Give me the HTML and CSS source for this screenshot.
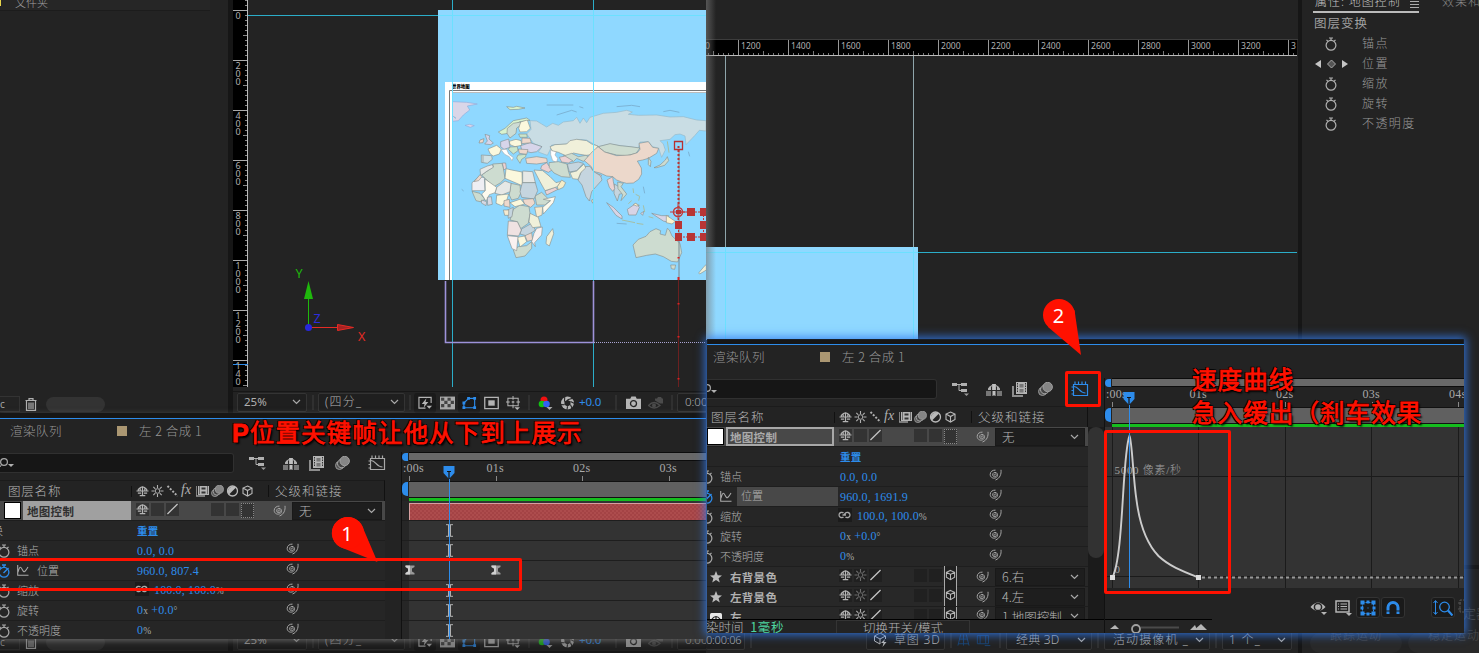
FILE: index.html
```html
<!DOCTYPE html>
<html lang="zh-CN">
<head>
<meta charset="utf-8">
<title>地图控制</title>
<link rel="stylesheet" href="styles.css">
</head>
<body>
<svg class="defs" width="0" height="0">
  <symbol id="spiral" viewBox="0 0 13 12"><path d="M5.200 6.600C4.600 4.600 7.500 4.300 7.300 6.400 7.100 8.200 3.900 8.200 3.700 6 3.500 3.800 5.500 3 7 3.600 9.200 4.600 8.900 7.300 7.200 8.500 4.800 10.100 1.300 8.700 1.200 5.600 1.100 2.700 3.500 1 6.500 1.100M12 .8c.5 4.200-1 8.500-5.500 10.200" fill="none" stroke="#a6a6a6" stroke-width="1"/></symbol>
  <symbol id="shy" viewBox="0 0 14 12"><path d="M2.500 5.500V4.200Q7-1 11.500 4.200V5.500M.5 6h13M7 1v10M4.500 3v3M9.500 3v3M2 8.300h3.500M8.500 8.300H12M4 11h6" fill="none" stroke="#b4b4b4" stroke-width="1.300"/></symbol>
  <symbol id="sun" viewBox="0 0 12 12"><path d="M6 0v3M6 9v3M0 6h3M9 6h3M1.800 1.800l2 2M8.200 8.200l2 2M10.200 1.800l-2 2M3.800 8.200l-2 2" stroke="currentColor" stroke-width="1.100"/><circle cx="6" cy="6" r="2.300" fill="none" stroke="currentColor"/></symbol>
  <symbol id="slash" viewBox="0 0 13 13"><path d="M1 12L12 1" stroke="#c4c4c4" stroke-width="1.400"/></symbol>
  <symbol id="dots" viewBox="0 0 12 12"><path d="M1 1l10 10" stroke="#b0b0b0" stroke-width="2" stroke-dasharray="2 1.500"/></symbol>
  <symbol id="film" viewBox="0 0 16 15"><path d="M0 4h2v9h9v2H0z" fill="#8d8d8d"/><path d="M4 0h11v12H4z" fill="#b4b4b4"/><path d="M5.500 1v10M13.500 1v10" stroke="#333" stroke-dasharray="1.500 1"/><path d="M7.500 2h4v3.500h-4zM7.500 7h4v3.500h-4z" fill="#777"/></symbol>
  <symbol id="filmrow" viewBox="0 0 13 12"><path d="M0 1v10h9" fill="none" stroke="#999" stroke-width="1.600"/><path d="M2 1h11v9H2z" fill="#b4b4b4"/><path d="M3.500 1.500v8M11.500 1.500v8" stroke="#222" stroke-dasharray="1 1"/><path d="M5.500 2.500h4v2h-4zM5.500 6.500h4v2h-4z" fill="#333"/></symbol>
  <symbol id="blur" viewBox="0 0 15 14"><circle cx="4.500" cy="9.500" r="4" fill="#555" stroke="#999"/><circle cx="6.800" cy="7.500" r="4.300" fill="#444" stroke="#aaa"/><circle cx="9.700" cy="5" r="4.700" fill="#858585" stroke="#a0a0a0"/></symbol>
  <symbol id="half" viewBox="0 0 12 12"><circle cx="6" cy="6" r="5" fill="none" stroke="#bbb" stroke-width="1.300"/><path d="M2.500 9.500A5 5 0 0 1 9.500 2.500z" fill="#bbb"/></symbol>
  <symbol id="cube" viewBox="0 0 12 12"><path d="M6 1l4.500 2v5.500L6 11 1.500 8.500V3zM1.500 3L6 5.500 10.500 3M6 5.500V11" fill="none" stroke="#b8b8b8" stroke-width="1.100"/></symbol>
  <symbol id="watch" viewBox="0 0 12 14"><circle cx="6" cy="8.300" r="4.900" fill="none" stroke="currentColor" stroke-width="1.200"/><path d="M4 1h4M6 1v2.500M1.500 2.800l1.500 1.500M10.500 2.800L9 4.300" stroke="currentColor" stroke-width="1.200"/></symbol>
  <symbol id="watchon" viewBox="0 0 12 14"><circle cx="6" cy="8.300" r="4.900" fill="none" stroke="#2d8ceb" stroke-width="1.300"/><path d="M4 1h4M6 1v2.500M1.500 2.800l1.500 1.500M5.500 9L10.500 4" stroke="#2d8ceb" stroke-width="1.400"/></symbol>
  <symbol id="graph" viewBox="0 0 12 12"><path d="M.7 1v10.300H11.500M1 8C3 1 4 3 5.500 6S8 8 11 3" fill="none" stroke="#aaa" stroke-width="1.100"/></symbol>
  <symbol id="chain" viewBox="0 0 13 8"><path d="M8 4H4.500M5.500 2C4.500 1 1 1 1 4s3.500 3 4.500 2M7.500 6C8.500 7 12 7 12 4S8.500 1 7.500 2L6 4" fill="none" stroke="#a8a8a8" stroke-width="1.300"/></symbol>
  <symbol id="chev" viewBox="0 0 9 6"><path d="M1 1l3.500 3.500L8 1" fill="none" stroke="#a8a8a8" stroke-width="1.200"/></symbol>
  <symbol id="tree" viewBox="0 0 17 14"><path d="M0 1h5v3H0zM9 1h6v3H9zM9 7h6v3H9z" fill="#b0b0b0"/><path d="M5 2.500h4M7 2.500v6h2" stroke="#b0b0b0" fill="none"/><path d="M12 11.500h5L14.500 14z" fill="#999"/></symbol>
  <symbol id="hide" viewBox="0 0 16 13"><path d="M0 8h16v5H0z" fill="#777"/><path d="M2 7V5.500Q3 3 6 2V1h4v1q3 1 4 3.500V7z" fill="#b0b0b0"/><path d="M5.500 3.500V13M10.500 3.500V13" stroke="#2a2a2a"/><path d="M8 1v11" stroke="#c0c0c0" stroke-width="2"/><path d="M0 7.500h16" stroke="#2a2a2a"/></symbol>
  <symbol id="editor" viewBox="0 0 18 16"><path d="M2.500 3.500h14v11h-14zM4 3V.5M7.500 3V.5M11 3V.5M14.500 3V.5M2 6H.5M2 9.500H.5M2 13H.5" fill="none" stroke="currentColor" stroke-width="1.200"/><path d="M3 5.500c5 0 5 6.500 11.500 6.500" fill="none" stroke="currentColor" stroke-width="1.200"/></symbol>
  <symbol id="lens" viewBox="0 0 14 11"><circle cx="4" cy="4" r="3.400" fill="none" stroke="#a8a8a8" stroke-width="1.200"/><path d="M1.500 6.500L0 9" stroke="#a8a8a8"/><path d="M8 6h6l-3 3z" fill="#b0b0b0"/></symbol>
  <symbol id="star" viewBox="0 0 12 12"><path d="M6 0l1.700 4.200L12 4.400 8.600 7.200 9.800 11.600 6 9.100 2.200 11.600 3.400 7.200 0 4.400 4.300 4.200z" fill="#bcbcbc"/></symbol>
  <symbol id="trash" viewBox="0 0 12 13"><path d="M.5 2.500h11M4 2V.7h4V2M1.500 3v9.400h9V3M4 4.500v6.500M6 4.500v6.500M8 4.500v6.500" fill="none" stroke="#b0b0b0" stroke-width="1.200"/></symbol>
  <symbol id="ibeam" viewBox="0 0 8 13"><path d="M.5.700h7M.5 12.300h7M3 1v11M5 1v11" stroke="#b0b0b0" stroke-width="1"/></symbol>
  <symbol id="hour" viewBox="0 0 10 10"><path d="M.5.500h9v1.500L7 3.500v3L9.500 8v1.500h-9V8L3 6.500v-3L.5 2z" fill="#999"/><path d="M5 .5H.5v1.500L3 3.500v3L.5 8v1.500H5z" fill="#d0d0d0"/></symbol>
  <symbol id="marker" viewBox="0 0 12 14"><path d="M.5 1h11v7L6 14 .5 8z" fill="#2d8ceb"/><path d="M4 6.500h4M6 6.500V14" stroke="#141414" stroke-width="1.200"/></symbol>
  <!-- viewer footer tools -->
  <symbol id="v-fast" viewBox="0 0 16 14"><path d="M8 12.500H1V1h13v6" fill="none" stroke="#b5b5b5" stroke-width="1.200"/><path d="M9 2L4 8h3l-1 4 5-6H8z" fill="#b5b5b5"/><path d="M9 10h6l-3 3z" fill="#b5b5b5"/></symbol>
  <symbol id="v-check" viewBox="0 0 14 12"><path d="M0 0h14v12H0z" fill="#aaa"/><path d="M1 1h3v3H1zM7 1h3v3H7zM4 4h3v3H4zM10 4h3v3h-3zM1 7h3v3H1zM7 7h3v3H7z" fill="#444"/></symbol>
  <symbol id="v-mask" viewBox="0 0 16 14"><path d="M2 12V7l5-5h6.500v10z" fill="none" stroke="#2d8ceb" stroke-width="1.200"/><path d="M.5 10.500h3v3h-3zM.5 5.500h3v3h-3zM5.500.5h3v3h-3zM12 .5h3v3h-3zM12 10.500h3v3h-3z" fill="#2d8ceb"/></symbol>
  <symbol id="v-roi" viewBox="0 0 14 12"><path d="M.7.700h12.600v10.600H.7z" fill="none" stroke="#b5b5b5" stroke-width="1.200"/><path d="M4 3.500h6v5H4z" fill="#b5b5b5"/></symbol>
  <symbol id="v-grid" viewBox="0 0 16 15"><path d="M2 2.500h11v8H2zM7.500 0v4M7.500 9v4M0 6.500h4M11 6.500h4M6 6.500h3M7.500 5v3" fill="none" stroke="#b5b5b5" stroke-width="1.100"/><path d="M9 12h6l-3 3z" fill="#b5b5b5"/></symbol>
  <symbol id="v-rgb" viewBox="0 0 14 14"><circle cx="5.500" cy="4" r="3.500" fill="#f01010"/><circle cx="3.500" cy="8" r="3.300" fill="#12c112"/><circle cx="8" cy="8" r="3.300" fill="#3161f5"/><path d="M8 11h6l-3 3z" fill="#aaa"/></symbol>
  <symbol id="v-iris" viewBox="0 0 13 13"><circle cx="6.500" cy="6.500" r="6" fill="#b5b5b5"/><path d="M6.500 3.500l2.800 1.700v3L6.500 9.700 3.700 8.200V5.200z" fill="#242424"/><path d="M6.500 3.500L11.500 2M9.300 8.200L11 12M3.700 8.200L0 8M6.500 9.700L6 13M3.700 5.200L4 0M9.300 5.200L13 7" stroke="#242424"/></symbol>
  <symbol id="v-cam" viewBox="0 0 14 12"><path d="M0 2h4l1-2h4l1 2h4v9.500H0z" fill="#b5b5b5"/><circle cx="7" cy="6.500" r="2.800" fill="#b5b5b5" stroke="#242424" stroke-width="1.200"/></symbol>
  <symbol id="v-eye" viewBox="0 0 15 13"><path d="M.5 9Q6 3 12 9 6 14 .5 9z" fill="none" stroke="#4b4b4b" stroke-width="1.300"/><circle cx="6" cy="9" r="2" fill="#4b4b4b"/><path d="M7 2h2l1-1.500h3l1 1.500h1v5h-3L7 4z" fill="#4b4b4b"/></symbol>
</svg>

<main class="stage">

<!-- ============ left application ============ -->
<section class="app app-left">
  <div class="work">
    <div class="project"><div class="folder"><i class="yellow"></i>文件夹</div></div>
    <svg class="vruler" width="15" height="387" viewBox="0 0 15 387">
      <defs>
        <pattern id="vt" width="15" height="50" y="10" patternUnits="userSpaceOnUse"><path d="M0 .5h15" stroke="#aaa"/><path d="M12 5.500h3M12 10.500h3M12 15.500h3M12 20.500h3M10 25.500h5M12 30.500h3M12 35.500h3M12 40.500h3M12 45.500h3" stroke="#888"/></pattern>
      </defs>
      <rect width="15" height="387" fill="#000"/><rect width="15" height="387" fill="url(#vt)"/><path d="M14.500 0v387" stroke="#bbb"/>
      <path d="M0 364.500h15" stroke="#2d8ceb"/>
      <g class="vlab">
        <text x="2.500" y="19">0</text>
        <text><tspan x="2.500" y="69">2</tspan><tspan x="2.500" y="77">0</tspan><tspan x="2.500" y="85">0</tspan></text>
        <text><tspan x="2.500" y="119">4</tspan><tspan x="2.500" y="127">0</tspan><tspan x="2.500" y="135">0</tspan></text>
        <text><tspan x="2.500" y="169">6</tspan><tspan x="2.500" y="177">0</tspan><tspan x="2.500" y="185">0</tspan></text>
        <text><tspan x="2.500" y="219">8</tspan><tspan x="2.500" y="227">0</tspan><tspan x="2.500" y="235">0</tspan></text>
        <text><tspan x="2.500" y="269">1</tspan><tspan x="2.500" y="277">0</tspan><tspan x="2.500" y="285">0</tspan><tspan x="2.500" y="293">0</tspan></text>
        <text><tspan x="2.500" y="319">1</tspan><tspan x="2.500" y="327">2</tspan><tspan x="2.500" y="335">0</tspan><tspan x="2.500" y="343">0</tspan></text>
        <text><tspan x="2.500" y="369">1</tspan><tspan x="2.500" y="377">4</tspan><tspan x="2.500" y="385">0</tspan></text>
      </g>
    </svg>
    <svg class="canvas" width="458" height="387" viewBox="248 0 458 387">
      <rect x="438" y="10" width="268" height="270" fill="#8fd8ff"/>
      <rect x="445" y="82" width="261" height="198" fill="#fff"/>
      <path d="M706 90.500H449.500V280" fill="none" stroke="#777"/>
      <rect x="452" y="93" width="254" height="187" fill="#8fd8ff"/><path d="M452 92.500h254" stroke="#bbb"/>
      <text x="452" y="88" class="maptitle">世界地图</text>
      <!-- map drawn at three units per pixel -->
      <svg x="452" y="93" width="254" height="187" viewBox="66 279 762 561">
        <g stroke="#858b88" stroke-width="1.800" stroke-linejoin="round">
          <path fill="#dad6e8" stroke="#8fa8d8" d="M66 305L110 307 142 312 112 318 119 330 100 345 85 362 66 364zM105 376l14-3 14 4-12 5z"/>
          <path fill="#c9dde4" stroke="#93b5c4" d="M300 362L320 363 335 372 350 381 368 370 385 376 400 366 430 362 440 352 450 370 460 354 470 368 480 352 520 340 560 337 590 331 607 336 595 343 625 346 680 345 720 351 760 350 800 360 828 362 828 393 808 391 794 407 768 434 765 408 750 402 735 404 720 418 690 422 700 432 706 450 695 472 686 445 668 440 655 425 630 426 625 444 600 440 570 437 540 432 505 440 470 420 440 418 410 432 365 435 360 450 352 466 325 456 336 440 310 430 300 415 290 402 303 388z"/>
          <path fill="#d8f3cf" d="M205 396L225 385 250 362 290 354 300 361 270 365 245 380 235 400 215 403zM230 320l20 2 10-3 25 5-20 4-25 1z"/>
          <path fill="#cddcd4" d="M232 385L250 370 272 366 272 376 260 384 258 400 240 414 231 400z"/>
          <path fill="#fbf8dd" d="M272 366L292 360 301 385 290 395 270 396 266 385zM174 447L200 436 214 447 208 462 190 468 181 462zM238 424L258 418 273 422 275 436 255 440 240 434z"/>
          <path fill="#d7d5ea" d="M212 425L236 417 240 442 222 448 212 440zM272 437L300 428 336 440 320 455 303 458 275 450zM165 403l14 4-2 10 13 12-8 5-18-2 8-9z"/>
          <path fill="#eed8cc" d="M276 414L300 415 304 428 275 431zM265 447L294 449 290 463 268 460zM287 475L320 470 350 475 352 487 320 492 290 490zM150 420l12-4-3 12-12 1z"/>
          <path fill="#cfe0e4" d="M154 465L185 467 187 478 172 490 154 487zM159 467v20"/>
          <path fill="#cbe6cb" d="M240 441L262 440 264 452 250 462 235 448zM264 465L288 463 287 470 275 478 270 490 260 474zM266 402l24 0 2 10-22 0z"/>
          <path fill="#fff" stroke="#aaa" d="M213 449L230 448 236 462 250 473 246 482 238 470 224 463zM362 450l18 3-5 12 8 10-3 12-12-5-6-18z"/>
          <path fill="#f0f0da" d="M360 440L375 434 410 432 420 422 440 418 470 422 485 432 504 438 495 455 485 464 468 466 450 463 430 459 412 469 385 457 366 452z"/>
          <path fill="#cddcd0" d="M400 468L425 460 445 470 468 466 480 474 460 484 440 475 430 485 412 475z"/>
          <path fill="#ecd1d3" d="M388 472L405 468 428 482 415 489 395 486zM335 497L350 488 366 510 355 517 332 507zM345 573L375 562 384 568 350 585zM485 515L515 526 508 534 488 524zM217 489l10 0 2 16-8 5z"/>
          <path fill="#cddcd0" d="M357 488L385 485 411 492 415 512 421 532 395 530 372 519 358 503zM505 440L540 431 570 437 600 440 630 444 618 460 590 467 560 465 524 456z"/>
          <path fill="#ecd8cb" d="M463 482L487 455 504 440 524 456 560 467 600 465 622 458 630 448 627 430 655 425 668 442 686 445 680 460 655 475 638 480 622 483 634 504 635 522 626 538 610 549 590 550 575 546 560 540 548 530 530 528 510 519 490 514 484 500z"/>
          <path fill="#c5d5df" d="M412 492L445 486 460 490 440 512 418 516zM460 500L480 499 490 514 512 528 516 540 498 560 485 575 478 603 468 590 456 555 444 540 452 520zM553 552L575 565 586 580 568 582 562 603 552 580z"/>
          <path fill="#f0f0da" d="M420 518L440 513 462 492 467 504 452 518 444 538 428 536zM312 510L338 512 360 530 378 548 394 544 382 560 345 572 330 545zM483 602l6-4 0 12z"/>
          <path fill="#f5edc8" d="M395 540L407 548 400 562 385 569 382 560z"/>
          <path fill="#ecd3d3" d="M531 540L548 530 550 545 554 566 548 574 538 562z"/>
          <path fill="#cddcd0" d="M563 546L580 550 573 560 590 582 573 602 578 584 564 566zM655 472l8 12-2 16-6-6zM672 503L690 495 706 480 712 470 716 482 704 496 680 503z"/>
          <path fill="#d8d4e6" d="M530 608L550 622 576 648 576 657 558 646zM592 628L618 610 628 622 618 645 596 645zM632 640l10-6-4 12zM665 640L695 647 716 647 716 667 700 663z"/>
          <path fill="#fbf3cf" d="M709 646L736 664 726 672 709 668zM610 614l10 4 8-2-12-6z"/>
          <path fill="none" stroke="#a5bfa5" stroke-width="3" d="M609 565l2 14M617 583l12 6-3 13M605 602l-10 9M712 424l5 34M640 616l4 20M656 650l14 4M576 660l39 8M620 670l20 3"/>
          <path fill="#cddcd0" d="M609 735L625 718 648 709 660 695 678 686 692 692 690 702 706 706 712 685 718 690 726 708 750 730 755 758 743 786 724 784 700 770 676 762 650 766 618 773zM722 795l15 0-3 13-10-2z"/>
          <path fill="#eff0da" d="M806 819l15-18 8-8v17l-20 12zM350 710l18-24 3 15-13 37-10-7z"/>
          <path fill="#cddcd0" d="M155 525L190 500 188 492 216 490 220 505 225 535 212 548 192 560 163 533zM243 550L270 556 272 580 265 595 245 600 238 585zM315 588L335 577 360 602 345 615 320 615zM250 628L270 615 297 620 300 640 295 670 272 686 262 665 240 660zM126 574L150 580 165 598 150 605 138 602zM250 750L265 740 290 737 305 725 305 745 285 768 258 773z"/>
          <path fill="#e6e8e6" d="M150 508L172 498 187 494 190 502 170 514 152 527zM278 513L308 515 316 548 278 548zM200 562L225 543 243 550 240 575 215 585 195 580z"/>
          <path fill="#fbf8dd" d="M228 506L245 510 276 516 277 557 265 552 225 535zM200 586L236 582 230 602 215 617 198 610zM240 608L272 597 284 612 255 620zM262 712L284 708 290 725 270 741z"/>
          <path fill="#eeeef3" d="M126 548L148 530 163 533 165 572 126 572z"/>
          <path fill="#fdfaee" d="M165 537L200 562 195 578 178 584 168 604 155 582 166 572zM340 598L376 590 370 608 340 642 338 622 362 602z"/>
          <path fill="#c5d5df" d="M277 548L316 548 323 572 312 597 275 592 270 575zM275 687L305 670 316 690 292 708 270 702zM232 630L250 622 246 650 235 655z"/>
          <path fill="#eed8cc" d="M278 598L310 596 315 610 302 622 284 612zM285 707L305 698 308 720 292 724zM222 602L238 598 240 622 222 618zM132 545L150 524 156 530 146 542z"/>
          <path fill="#f5ead0" d="M314 622L338 620 336 645 320 652zM220 630h16v16h-12z"/>
          <path fill="#f0f0da" d="M300 640L325 652 333 680 308 683 297 665z"/>
          <path fill="#d6d8e4" d="M172 592l12-2 3 23-14 3zM155 600l15 5-2 12-14-8z"/>
          <path fill="#efe2e2" d="M235 663L262 665 274 690 266 708 232 705z"/>
          <path fill="#f9f1f1" d="M320 685L337 681 335 705 314 728 316 740 305 725 312 700zM232 707L264 710 260 752 246 746z"/>
        </g>
        <path d="M350 315l80 0M380 345l45-14 15 5M448 320l12 4M560 320l45-4 25 4M700 335l20-4 28 6M95 568l6 5M78 355l-8-6M560 670l30 2M775 455l4 14M640 560l4 20" fill="none" stroke="#7db4d6" stroke-width="3"/>
      </svg>
      <g fill="none">
        <path d="M452.500 0v387M593.500 0v387M248 15.500h190" stroke="#2badc8"/>
        <path d="M438 15.500h268M452.500 10v270M593.500 10v270" stroke="#6ce0ff"/>
        <path d="M445.500 281v61.500h148V281" stroke="#9d92d9" stroke-width="1.600"/>
        <path d="M594 342.500h112" stroke="#aaa4d2" stroke-dasharray="1 1"/>
        <path d="M678.500 280v107" stroke="#6b2020"/><path d="M679 150v130" stroke="#78888e"/>
        <path d="M678.500 146v62" stroke="#bd3434" stroke-width="2" stroke-dasharray="2 2"/>
        <path d="M678.500 257v1.500M678.500 277v3M678.500 303v1.500M678.500 336v1.500M678.500 378v1.500" stroke="#d22" stroke-width="2"/>
        <path d="M674.500 141.500h8v8h-8z" stroke="#b83030" stroke-width="1.300"/>
        <path d="M680 212h26M680 237h26M678.500 218v18M703.500 212v25" stroke="#bd3434" stroke-dasharray="2 1"/>
        <circle cx="678" cy="212" r="4.500" stroke="#c43c3c" stroke-width="1.500"/><path d="M670 212h16M678 204v16" stroke="#c43c3c"/>
      </g>
      <path d="M676 210h5v4h-5zM687 208h8v8h-8zM700 208h6v8h-6zM675 221h7v8h-7zM700 221h6v8h-6zM675 233h7v8h-7zM687 233h8v8h-8zM700 233h6v8h-6z" fill="#b83535"/>
      <path d="M308.500 327v-30" stroke="#1fb80c"/><path d="M308.500 281l4.500 18h-9z" fill="#1fb80c"/>
      <path d="M311 327.500h27M337.500 324.500v6l16-3z" stroke="#e52b25" fill="#a32222"/>
      <circle cx="308.500" cy="327.500" r="3.500" fill="#2828dc"/>
      <g class="axis"><text x="295.500" y="277.500" fill="#1fb80c">Y</text><text x="313.500" y="323" fill="#2c2cdc">Z</text><text x="358" y="341" fill="#e52b25">X</text></g>
    </svg>
  </div>
  <div class="strip">
    <div class="pfoot"><span class="bpc">c</span><svg class="tr"><use href="#trash"/></svg><span class="thumb"></span></div>
    <div class="vfoot">
      <span class="sel s25">25%<svg class="cv"><use href="#chev"/></svg></span><i class="sp"></i>
      <span class="sel sq">(四分_<svg class="cv"><use href="#chev"/></svg></span><i class="sp s1"></i>
      <span class="tb on"><svg><use href="#v-fast"/></svg></span><span class="tb"><svg><use href="#v-check"/></svg></span><span class="tb on"><svg><use href="#v-mask"/></svg></span><span class="tb"><svg><use href="#v-roi"/></svg></span><span class="tb"><svg><use href="#v-grid"/></svg></span><i class="sp s2"></i>
      <span class="tb"><svg><use href="#v-rgb"/></svg></span><span class="tb"><svg><use href="#v-iris"/></svg></span><span class="exp">+0.0</span><i class="sp s3"></i>
      <span class="tb"><svg><use href="#v-cam"/></svg></span><span class="tb"><svg><use href="#v-eye"/></svg></span><i class="sp s4"></i><span class="sel stime">0:00</span>
    </div>
  </div>
  <div class="behind"></div>
  <div class="strip low">
    <div class="pfoot"><span class="bpc">c</span><svg class="tr"><use href="#trash"/></svg><span class="thumb"></span></div>
    <div class="vfoot">
      <span class="sel s25">25%<svg class="cv"><use href="#chev"/></svg></span><i class="sp"></i>
      <span class="sel sq">(四分_<svg class="cv"><use href="#chev"/></svg></span><i class="sp s1"></i>
      <span class="tb on"><svg><use href="#v-fast"/></svg></span><span class="tb"><svg><use href="#v-check"/></svg></span><span class="tb on"><svg><use href="#v-mask"/></svg></span><span class="tb"><svg><use href="#v-roi"/></svg></span><span class="tb"><svg><use href="#v-grid"/></svg></span><i class="sp s2"></i>
      <span class="tb"><svg><use href="#v-rgb"/></svg></span><span class="tb"><svg><use href="#v-iris"/></svg></span><span class="exp">+0.0</span><i class="sp s3"></i>
      <span class="tb"><svg><use href="#v-cam"/></svg></span><span class="tb"><svg><use href="#v-eye"/></svg></span><i class="sp s4"></i><span class="sel stime">0:00</span>
    </div>
  </div>
</section>

<!-- ============ right application ============ -->
<section class="app app-right">
  <div class="view2">
    <svg class="canvas2" width="592" height="340" viewBox="706 0 592 340">
      <defs><pattern id="ht" x="738" width="50" height="16" y="40" patternUnits="userSpaceOnUse"><path d="M.5 0v16" stroke="#999"/><path d="M5.500 13v3M10.500 13v3M15.500 13v3M20.500 13v3M25.500 11v5M30.500 13v3M35.500 13v3M40.500 13v3M45.500 13v3" stroke="#777"/></pattern>
      <linearGradient id="edge"><stop offset="0" stop-color="#777" stop-opacity=".6"/><stop offset="1" stop-color="#777" stop-opacity="0"/></linearGradient></defs>
      <path d="M706 39.500h592" stroke="#3c3c3c"/>
      <rect x="706" y="40" width="591" height="16" fill="#000"/><rect x="706" y="40" width="591" height="16" fill="url(#ht)"/><path d="M706 55.500h591" stroke="#bbb"/>
      <g class="hlab"><text x="705" y="49">0</text><text x="741" y="49">1200</text><text x="791" y="49">1400</text><text x="841" y="49">1600</text><text x="891" y="49">1800</text><text x="941" y="49">2000</text><text x="991" y="49">2200</text><text x="1041" y="49">2400</text><text x="1091" y="49">2600</text><text x="1141" y="49">2800</text><text x="1191" y="49">3000</text><text x="1241" y="49">3200</text><text x="1291" y="49">3</text></g>
      <path d="M725.500 56v192M913.500 56v192" stroke="#8fa5ab" stroke-width="1"/><path d="M918 252.500h379" stroke="#2badc8"/>
      <rect x="706" y="247" width="212" height="93" fill="#8fd8ff"/><path d="M706 252.500h212M725.500 247v93M913.500 247v93" stroke="#6ce0ff"/>
      <rect x="706" width="10" height="340" fill="url(#edge)"/>
    </svg>
    <div class="vfoot foot2">
      <span class="sel c1">0:00:06</span><i class="sp"></i>
      <span class="sel c2"><svg class="dr" viewBox="0 0 16 15"><path d="M7 12L1.500 9V4L7 1l5.500 3v3M1.500 4L7 7l5.500-3M7 7v5" fill="none" stroke="#b5b5b5"/><path d="M12 7l-4 4h2.500l-1 4 4-5H11z" fill="#b5b5b5"/></svg>草图 3D</span><i class="sp"></i>
      <svg class="bl" viewBox="0 0 40 15"><path d="M1 11h12M3 6h8M4 1L1 13M7 1v12M10 1l3 12M22 2h12v9H22zM25 2v9M31 2v9M30 13h6" fill="none" stroke="#1a4474"/></svg><i class="sp"></i>
      <span class="sel c3">经典 3D<svg class="cv"><use href="#chev"/></svg></span><i class="sp"></i>
      <span class="sel c4">活动摄像机 _<svg class="cv"><use href="#chev"/></svg></span><i class="sp"></i>
      <span class="sel c5">1 个_<svg class="cv"><use href="#chev"/></svg></span>
    </div>
  </div>
  <div class="props">
    <div class="ptabs"><span class="cur">属性: 地图控制 <svg width="9" height="9"><path d="M0 1.500h9M0 4.500h9M0 7.500h9" stroke="#aaa"/></svg></span><span class="nxt">效果和</span></div>
    <div class="ptitle">图层变换</div>
    <div class="prow"><svg><use href="#watch"/></svg><span>锚点</span></div>
    <div class="prow key"><svg viewBox="0 0 34 10"><path d="M6 1v8L0 5zM27 1v8l6-4z" fill="#c5c5c5"/><path d="M16.500 1l4 4-4 4-4-4z" fill="#555" stroke="#aaa"/></svg><span>位置</span></div>
    <div class="prow"><svg><use href="#watch"/></svg><span>缩放</span></div>
    <div class="prow"><svg><use href="#watch"/></svg><span>旋转</span></div>
    <div class="prow"><svg><use href="#watch"/></svg><span>不透明度</span></div>
    <div class="fill"></div>
    <div class="track"><div class="ding">定器</div><div class="btns"><span>跟踪运动</span><span>稳定运动</span></div></div>
  </div>
</section>

<!-- ============ timeline one ============ -->
<section class="win win1"><div class="inner">
  <div class="tabs"><span class="rq">渲染队列</span><i class="sw"></i><span>左 2 合成 1</span></div>
  <div class="body">
    <div class="left">
      <div class="tools"><div class="search"><svg><use href="#lens"/></svg></div><svg class="t1"><use href="#tree"/></svg><svg class="t2"><use href="#hide"/></svg><svg class="t3"><use href="#film"/></svg><svg class="t4"><use href="#blur"/></svg><svg class="t5"><use href="#editor"/></svg></div>
      <div class="head"><span class="hn">图层名称</span><span class="hs"><svg><use href="#shy"/></svg><svg><use href="#sun"/></svg><svg><use href="#dots"/></svg><em>fx</em><svg><use href="#filmrow"/></svg><svg><use href="#blur"/></svg><svg><use href="#half"/></svg><svg><use href="#cube"/></svg></span><span class="hp">父级和链接</span></div>
      <div class="layer top"><span class="ln"><i class="white"></i><b class="nm">地图控制</b></span><span class="cells"><i><svg><use href="#shy"/></svg></i><i></i><i><svg><use href="#slash"/></svg></i><u></u><u></u><i></i><i></i><i class="dot"></i></span><svg class="pk"><use href="#spiral"/></svg><span class="dd">无<svg class="cv"><use href="#chev"/></svg></span></div>
      <div class="prop"><span class="pn"><s>换</s></span><span class="pv reset">重置</span></div>
      <div class="prop"><span class="pn"><svg class="w"><use href="#watch"/></svg>锚点</span><span class="pv">0.0, 0.0</span><svg class="pk"><use href="#spiral"/></svg></div>
      <div class="prop"><span class="pn"><svg class="w on"><use href="#watchon"/></svg><svg class="g"><use href="#graph"/></svg>位置</span><span class="pv">960.0, 807.4</span><svg class="pk"><use href="#spiral"/></svg></div>
      <div class="prop"><span class="pn"><svg class="w"><use href="#watch"/></svg>缩放</span><span class="pv"><i class="ch"><svg><use href="#chain"/></svg></i>100.0, 100.0<small>%</small></span><svg class="pk"><use href="#spiral"/></svg></div>
      <div class="prop"><span class="pn"><svg class="w"><use href="#watch"/></svg>旋转</span><span class="pv">0<small>x</small> +0.0<small>°</small></span><svg class="pk"><use href="#spiral"/></svg></div>
      <div class="prop"><span class="pn"><svg class="w"><use href="#watch"/></svg>不透明度</span><span class="pv">0<small>%</small></span><svg class="pk"><use href="#spiral"/></svg></div>
    </div>
    <div class="right">
      <div class="nav"></div>
      <div class="times"><span>:00s</span><span>01s</span><span>02s</span><span>03s</span></div>
      <div class="warea"></div>
      <div class="lane bar"><div class="clip"></div></div>
      <div class="lane"><svg><use href="#ibeam"/></svg></div><div class="lane"><svg><use href="#ibeam"/></svg></div>
      <div class="lane keys"><svg><use href="#hour"/></svg><svg><use href="#hour"/></svg></div>
      <div class="lane"><svg><use href="#ibeam"/></svg></div><div class="lane"><svg><use href="#ibeam"/></svg></div><div class="lane"><svg><use href="#ibeam"/></svg></div>
      <div class="head-line"><svg><use href="#marker"/></svg></div>
    </div>
  </div>
</div></section>

<!-- ============ timeline two ============ -->
<section class="win win2"><div class="inner">
  <div class="tabs"><span class="rq">渲染队列</span><i class="sw"></i><span>左 2 合成 1</span></div>
  <div class="body">
    <div class="left">
      <div class="tools"><div class="search"><svg><use href="#lens"/></svg></div><svg class="t1"><use href="#tree"/></svg><svg class="t2"><use href="#hide"/></svg><svg class="t3"><use href="#film"/></svg><svg class="t4"><use href="#blur"/></svg><svg class="t5 act"><use href="#editor"/></svg></div>
      <div class="head"><span class="hn">图层名称</span><span class="hs"><svg><use href="#shy"/></svg><svg><use href="#sun"/></svg><svg><use href="#dots"/></svg><em>fx</em><svg><use href="#filmrow"/></svg><svg><use href="#blur"/></svg><svg><use href="#half"/></svg><svg><use href="#cube"/></svg></span><span class="hp">父级和链接</span></div>
      <div class="layer top"><span class="ln"><i class="white"></i><b class="nm box">地图控制</b></span><span class="cells"><i><svg><use href="#shy"/></svg></i><i></i><i><svg><use href="#slash"/></svg></i><u></u><u></u><i></i><i></i><i class="dot"></i></span><svg class="pk"><use href="#spiral"/></svg><span class="dd">无<svg class="cv"><use href="#chev"/></svg></span></div>
      <div class="prop"><span class="pn"></span><span class="pv reset">重置</span></div>
      <div class="prop"><span class="pn"><svg class="w"><use href="#watch"/></svg>锚点</span><span class="pv">0.0, 0.0</span><svg class="pk"><use href="#spiral"/></svg></div>
      <div class="prop"><span class="pn"><svg class="w on"><use href="#watchon"/></svg><svg class="g"><use href="#graph"/></svg><span class="selname">位置</span></span><span class="pv">960.0, 1691.9</span><svg class="pk"><use href="#spiral"/></svg></div>
      <div class="prop"><span class="pn"><svg class="w"><use href="#watch"/></svg>缩放</span><span class="pv"><i class="ch"><svg><use href="#chain"/></svg></i>100.0, 100.0<small>%</small></span><svg class="pk"><use href="#spiral"/></svg></div>
      <div class="prop"><span class="pn"><svg class="w"><use href="#watch"/></svg>旋转</span><span class="pv">0<small>x</small> +0.0<small>°</small></span><svg class="pk"><use href="#spiral"/></svg></div>
      <div class="prop"><span class="pn"><svg class="w"><use href="#watch"/></svg>不透明度</span><span class="pv">0<small>%</small></span><svg class="pk"><use href="#spiral"/></svg></div>
      <div class="layer"><span class="ln"><svg class="st"><use href="#star"/></svg><b class="nm">右背景色</b></span><span class="cells"><i><svg><use href="#shy"/></svg></i><i class="dim"><svg><use href="#sun"/></svg></i><i><svg><use href="#slash"/></svg></i><u></u><u></u><i></i><i></i><i class="cb"><svg><use href="#cube"/></svg></i></span><svg class="pk"><use href="#spiral"/></svg><span class="dd">6.右<svg class="cv"><use href="#chev"/></svg></span></div>
      <div class="layer"><span class="ln"><svg class="st"><use href="#star"/></svg><b class="nm">左背景色</b></span><span class="cells"><i><svg><use href="#shy"/></svg></i><i class="dim"><svg><use href="#sun"/></svg></i><i><svg><use href="#slash"/></svg></i><u></u><u></u><i></i><i></i><i class="cb"><svg><use href="#cube"/></svg></i></span><svg class="pk"><use href="#spiral"/></svg><span class="dd">4.左<svg class="cv"><use href="#chev"/></svg></span></div>
      <div class="layer cut"><span class="ln"><svg class="st" viewBox="0 0 12 12"><rect width="12" height="12" rx="1.500" fill="#e8e8e8"/><path d="M2 6q4-5 8 0M3 10q3-6 6 0M6 4v6" fill="none" stroke="#222" stroke-width="1.200"/></svg><b class="nm">左</b></span><span class="cells"><i><svg><use href="#shy"/></svg></i><i><svg><use href="#sun"/></svg></i><i><svg><use href="#slash"/></svg></i><u></u><u></u><i></i><i></i><i class="cb"><svg><use href="#cube"/></svg></i></span><svg class="pk"><use href="#spiral"/></svg><span class="dd">1.地图控制<svg class="cv"><use href="#chev"/></svg></span></div>
      <div class="foot"><span class="rt">染时间 <b>1毫秒</b></span><span class="tog">切换开关/模式</span></div>
      <i class="scroll"></i>
    </div>
    <div class="right">
      <div class="nav"></div>
      <div class="times"><span>:00s</span><span>01s</span><span>02s</span><span>03s</span><span>04s</span></div>
      <div class="warea"></div>
      <svg class="plot" width="359" height="161" viewBox="1105 427 359 161">
        <rect x="1105" y="427" width="359" height="161" fill="#333"/>
        <path d="M1112.500 427v161M1198.500 427v161M1285.500 427v161M1371.500 427v161M1458.500 427v161M1105 476.500h359M1105 576.500h359" stroke="#1b1b1b"/>
        <path d="M1202 577.500h262" stroke="#999" stroke-width="2" stroke-dasharray="3 3"/>
        <text x="1114.500" y="473.500" class="gl">5000 像素/秒</text><text x="1114.500" y="573" class="gl">0</text>
        <path d="M1112.300 577.500C1124 556 1122 453 1129.500 436 1132 440 1133 477 1136.500 500 1140 527 1147 544 1158.500 556 1169 566 1182 571 1198.500 577.500" fill="none" stroke="#ccc" stroke-width="1.900"/>
        <path d="M1110 575h5v5h-5zM1196 575h5v5h-5z" fill="#ddd"/>
      </svg>
      <div class="gtools">
        <svg viewBox="0 0 18 14" class="q1"><path d="M.5 6Q8 -3 15.500 6 8 14 .5 6z" fill="#b5b5b5"/><circle cx="8" cy="6" r="3.600" fill="#b5b5b5" stroke="#242424" stroke-width="1.500"/><path d="M11 11h6l-3 3z" fill="#b5b5b5"/></svg>
        <svg viewBox="0 0 18 16" class="q2"><path d="M1 1h13v11H1z" fill="none" stroke="#b5b5b5" stroke-width="1.500"/><path d="M3 4h1M5.500 4H12M3 6.500h1M5.500 6.500H12M3 9h1M5.500 9H12" stroke="#b5b5b5"/><path d="M11 13h6l-3 3z" fill="#b5b5b5"/></svg>
        <span><svg viewBox="0 0 16 16"><path d="M2.500 2.500h11v11h-11z" fill="none" stroke="#2d8ceb" stroke-dasharray="2 1"/><path d="M.5.500h4v4h-4zM6.500.500h3v3h-3zM11.500.500h4v4h-4zM.5 6.500h3v3h-3zM12.500 6.500h3v3h-3zM.5 11.500h4v4h-4zM6.500 12.500h3v3h-3zM11.500 11.500h4v4h-4zM7.500 7.500h1v1h-1z" fill="#2d8ceb"/></svg></span>
        <span class="mg"><svg viewBox="0 0 16 16"><path d="M3 14V7.500a5 5 0 0 1 10 0V14" fill="none" stroke="#2d8ceb" stroke-width="3"/><path d="M1 11h4M11 11h4" stroke="#1b1b1b"/></svg></span>
        <span class="zm"><svg viewBox="0 0 20 16"><path d="M2.500 1v13M.5 3l2-2.500L4.500 3M.5 12l2 2.500 2-2.500" fill="none" stroke="#2d8ceb"/><circle cx="11.500" cy="7" r="4.800" fill="none" stroke="#2d8ceb" stroke-width="1.300"/><path d="M15 10.500l4.500 5" stroke="#2d8ceb" stroke-width="2.200"/></svg></span>
        <svg class="q3" viewBox="0 0 8 14"><path d="M8 1H2v12h6M0 4h4M0 10h4" fill="none" stroke="#555" stroke-dasharray="3 1"/></svg>
      </div>
      <div class="zfoot"><svg width="110" height="14" viewBox="0 0 110 14"><path d="M5 9l5-4 4 4zM85 10l5-5 2 5z" fill="#b5b5b5"/><path d="M89 10l7-6 6 6z" fill="#b5b5b5"/><path d="M36 7.500h38" stroke="#4a4a4a" stroke-width="2"/><circle cx="31" cy="9" r="4" fill="#222" stroke="#a0a0a0" stroke-width="1.800"/></svg></div>
      <div class="head-line"><svg><use href="#marker"/></svg></div>
    </div>
  </div>
</div></section>

<!-- ============ annotations ============ -->
<i class="mark m1"></i><i class="mark m2"></i><i class="mark m3"></i>
<svg class="pins" width="1479" height="653" viewBox="0 0 1479 653">
  <path d="M363 528L377.500 562 340 547A16 16 0 1 1 363 528z" fill="#ff1100"/><circle cx="348" cy="533" r="16" fill="#ff1100"/>
  <path d="M1074.500 310L1081 355 1048 327z" fill="#ff1100"/><circle cx="1059" cy="315" r="16" fill="#ff1100"/>
  <g class="num"><text x="347" y="541">1</text><text x="1058.500" y="323">2</text></g>
</svg>
<p class="note n1"><b>P</b>位置关键帧让他从下到上展示</p>
<p class="note n2">速度曲线</p>
<p class="note n3">急入缓出（刹车效果</p>
</main>
</body>
</html>
```
FILE: styles.css
```css
* { box-sizing: border-box; }
body { margin: 0; background: #1a1a1a; font-family: "Noto Sans", "Noto Sans CJK SC", sans-serif; color: #a3a3a3; font-size: 12px; }
i, em, s, u { font-style: normal; text-decoration: none; }
svg { display: block; flex: none; }
.defs { position: absolute; }
.stage { position: relative; width: 1479px; height: 653px; overflow: hidden; display: flex; }
.app { height: 653px; overflow: hidden; background: #161616; }
.app-left { width: 706px; }
.app-right { width: 773px; display: flex; gap: 4px; }

/* left application */
.work { display: flex; height: 391px; background: linear-gradient(#161616, #161616) 228px 0 / 5px 100% no-repeat, #232323; }
.project { width: 228px; margin-right: 5px; background: #232323; }
.folder { width: 210px; height: 11px; overflow: hidden; border-bottom: 1px solid #1c1c1c; background: #262626; font: 300 11px/5px "Noto Sans CJK SC", sans-serif; display: flex; gap: 14px; color: #a0a0a0; }
.yellow { width: 1px; height: 6px; background: #e7d54b; }
.vruler, .canvas { background: #232323; }
.hlab text { font: 8.600px "Noto Sans", sans-serif; fill: #b0b0b0; }
.vlab text { font: 9px "Noto Sans", sans-serif; fill: #b0b0b0; }
.maptitle { font: 900 4.400px "Noto Sans CJK SC", sans-serif; fill: #000; }
.axis text { font: 12.500px "Noto Sans", sans-serif; }
.strip { display: flex; height: 22px; gap: 5px; }
.pfoot { width: 228px; background: #232323; display: flex; align-items: center; padding-top: 4px; }
.bpc { width: 20px; height: 16px; border: 1px solid #333; border-left: 0; line-height: 14px; font-size: 10px; }
.tr { width: 12px; height: 13px; margin: 0 8px 0 5px; }
.thumb { width: 59px; height: 15px; border-radius: 8px; background: #333; margin-left: 1px; }
.vfoot { flex: 1; background: #232323; border-top: 1px solid #171717; display: flex; align-items: center; padding-left: 4px; overflow: hidden; min-width: 0; }
.sel { flex: none; height: 19px; border: 1px solid #343434; border-radius: 2px; background: #1f1f1f; display: flex; align-items: center; padding: 0 5px 2px 6px; font-size: 12px; line-height: 16px; color: #b0b0b0; white-space: pre; font-weight: 300; }
.cv { width: 9px; height: 6px; margin-left: auto; }
.s25 { width: 70px; font-weight: 400; font-size: 11.500px; } .sq { width: 87px; letter-spacing: 1.200px; }
.stime { width: 90px; padding-left: 7px; font-size: 11.500px; }
.sp { flex: none; width: 2px; height: 15px; background: #303030; margin: 0 4px 0 5px; }
.s1 { margin: 0 3px 0 4px; } .s2 { margin: 0 4px 0 4px; } .s3 { margin: 0 5px 0 14px; } .s4 { margin: 0 4px 0 5px; }
.tb { width: 22px; height: 20px; border-radius: 3px; display: flex; align-items: center; justify-content: center; flex: none; }
.tb.on { background: #1a1a1a; }
.tb svg { width: 15px; height: 14px; }
.exp { color: #2d8ceb; width: 23px; padding-left: 1px; font-size: 11.500px; line-height: 16px; padding-bottom: 2px; letter-spacing: -.2px; }
.behind { height: 216px; }
.low { opacity: .7; }

/* right application */
.view2 { width: 592px; display: flex; flex-direction: column; background: #232323; }
.foot2 { flex: none; height: 22px; margin-top: 289px; padding-left: 0; color: #aaa; }
.foot2 .sp { margin: 0 5px; }
.c1 { width: 39px; padding-left: 0; font-size: 11px; letter-spacing: -.2px; border-left: 0; }
.c2 { width: 79px; margin-left: 109px; letter-spacing: .8px; gap: 5px; }
.dr { width: 16px; height: 15px; } .bl { width: 37px; height: 15px; }
.c3 { width: 86px; padding-left: 9px; letter-spacing: .2px; } .c4 { width: 106px; padding-left: 8px; letter-spacing: 1.100px; } .c5 { width: 70px; letter-spacing: 1.300px; }
.props { flex: 1; background: #232323; padding-left: 11px; display: flex; flex-direction: column; overflow: hidden; font-family: "Noto Sans CJK SC", sans-serif; font-weight: 300; }
.ptabs { display: flex; height: 13px; gap: 23px; flex: none; overflow: hidden; font-size: 12px; letter-spacing: 1px; line-height: 2px; white-space: pre; }
.cur { width: 106px; display: flex; justify-content: space-between; border-bottom: 2px solid #bbb; color: #c5c5c5; flex: none; padding-left: 2px; }
.nxt { color: #888; }
.ptitle { font-size: 12.500px; letter-spacing: 1px; height: 21px; line-height: 20px; color: #a0a0a0; font-weight: 400; padding-left: 1px; }
.prow { display: flex; height: 20px; align-items: center; font-size: 12px; line-height: 18px; letter-spacing: 1.400px; color: #999; }
.prow span { margin-top: -2px; }
.prow svg { width: 12px; height: 14px; margin: 0 25px 0 12px; color: #b0b0b0; }
.prow.key svg { width: 34px; height: 10px; margin: 0 13px 0 2px; }
.fill { flex: 1; border-bottom: 4px solid #191919; }
.track { height: 84px; color: #4e4e4e; }
.ding { margin: 34px 0 0 150px; white-space: nowrap; font-size: 13px; line-height: 20px; }
.btns { display: flex; gap: 6px; margin: 10px 0 0 -3px; }
.btns span { width: 92px; height: 20px; border-radius: 10px; background: #292929; line-height: 3px; text-align: center; letter-spacing: 1px; flex: none; }

/* timeline windows */
.win { position: absolute; background: #161616; padding-top: 5px; }
.win1 { left: 0; top: 413px; width: 706px; height: 226px; box-shadow: 0 2px 6px rgba(150,150,150,.55); }
.win2 { left: 707px; top: 339px; width: 757px; height: 294px; box-shadow: 0 0 9px 2px rgba(50,125,240,.85), inset 0 0 1px #2d75d5; }
.inner { border-top: 1px solid #2d8ceb; background: #232323; height: 100%; overflow: hidden; position: relative; }
.win2 .tabs, .win2 .body { margin-left: -4px; }
.tabs { height: 33px; padding: 3px 0 0 10px; display: flex; align-items: flex-start; font: 300 12.500px/17px "Noto Sans CJK SC", sans-serif; letter-spacing: .5px; color: #999; white-space: pre; }
.rq { width: 107px; }
.sw { width: 10px; height: 10px; background: #ab9772; margin: 4px 12px 0 0; }
.body { display: grid; grid-template-columns: 402px 1fr; }
.left { position: relative; width: 402px; border-right: 1px solid #111; }
.tools { display: flex; height: 28px; align-items: flex-start; padding-top: 1px; }
.search { width: 234px; height: 20px; background: #161616; border: 1px solid #303030; border-left: 0; border-radius: 0 3px 3px 0; padding-top: 4px; }
.search svg { width: 14px; height: 11px; }
.t1 { width: 17px; height: 14px; margin: 3px 0 0 15px; }
.t2 { width: 16px; height: 13px; margin: 4px 0 0 17px; }
.t3 { width: 16px; height: 15px; margin: 3px 0 0 10px; }
.t4 { width: 15px; height: 14px; margin: 3px 0 0 10px; }
.t5 { width: 18px; height: 16px; margin: 2px 0 0 18px; color: #a8a8a8; }
.t5.act { color: #2d8ceb; }
.head { height: 21px; width: 385px; border-top: 1px solid #1b1b1b; border-right: 1px solid #111; display: flex; align-items: center; font: 300 12.500px/18px "Noto Sans CJK SC", sans-serif; color: #b5b5b5; letter-spacing: .8px; }
.hn { width: 132px; padding-left: 8px; border-right: 1px solid #111; height: 11px; line-height: 10px; }
.hs { width: 137px; padding-left: 4px; display: flex; gap: 2px; align-items: center; border-right: 1px solid #111; height: 12px; }
.hs svg, .hs em { width: 13px; height: 12px; color: #b0b0b0; flex: none; }
.hs em { font: italic 14px/10px "Liberation Serif", serif; letter-spacing: 0; }
.hp { padding-left: 6px; letter-spacing: 1px; }
.layer { display: flex; height: 20px; width: 385px; background: #282828; border-bottom: 1px solid #1d1d1d; align-items: center; }
.layer.top { background: #484848; }
.layer .ln { width: 131px; display: flex; align-items: center; height: 19px; }
.white { width: 17px; height: 17px; background: #fff; border: 1px solid #000; margin-left: 4px; }
.nm { font: 700 11.500px/19px "Noto Sans CJK SC", sans-serif; color: #b0b0b0; letter-spacing: .3px; padding-left: 6px; padding-top: 1px; }
.top .nm { flex: 1; margin-left: 2px; padding-left: 4px; background: #a0a0a0; color: #303030; height: 19px; }
.top .nm.box { background: #484848; border: 2px solid #a8a8a8; color: #aaa; line-height: 15px; padding-left: 2px; }
.st { width: 12px; height: 12px; margin-left: 7px; margin-right: 2px; }
.cells { display: flex; gap: 2px; width: 142px; padding-left: 5px; height: 13px; }
.cells i, .cells u { width: 13px; height: 13px; background: #202020; color: #aaa; }
.layer:not(.cut) .cells { margin-top: -2px; }
.top .cells i { background: #333; }
.cells u { background: none; }
.cells svg { width: 13px; height: 12px; }
.cells .dim { color: #6c6c6c; }
.cells .dot, .top .cells .dot { border: 1px dotted #888; height: 15px; }
.cells .cb { border: solid #aaa; border-width: 0 1px; height: 20px; margin-top: -3px; padding-top: 3px; }
.cells .cb svg { width: 11px; height: 12px; }
.pk { width: 13px; height: 12px; }
.dd { width: 90px; height: 18px; margin-left: 6px; background: #1e1e1e; border: 1px solid #191919; display: flex; align-items: center; padding: 0 5px 0 6px; font: 300 12.500px/17px "Noto Sans CJK SC", sans-serif; color: #b8b8b8; white-space: nowrap; }
.layer.cut { height: 12px; align-items: flex-start; overflow: hidden; border-bottom: 0; }
.cut .cells, .cut .pk, .cut .st { margin-top: 2px; }
.cut .st { margin-top: 4px; }
.prop { display: flex; height: 20px; width: 385px; background: #262626; border-bottom: 1px solid #1e1e1e; align-items: center; }
.pn { width: 137px; display: flex; align-items: center; font: 300 11px/17px "Noto Sans CJK SC", sans-serif; color: #b0b0b0; height: 19px; padding-bottom: 1px; }
.pn s { margin-left: -8px; }
.w { width: 12px; height: 14px; margin: 1px 7px 0 -2px; color: #aaa; }
.g { width: 12px; height: 12px; margin-right: 8px; }
.selname { background: #484848; height: 19px; margin: 1px 2px 0 -2px; padding-left: 4px; flex: 1; }
.selname { margin-left: -3px; }
.pv { width: 149px; font: 12px/18px "Liberation Serif", serif; color: #2d8ceb; display: flex; align-items: baseline; white-space: pre; letter-spacing: .15px; }
.reset { font: 700 10.500px/18px "Noto Sans CJK SC", sans-serif; }
.pv small { font-size: 9.500px; color: #aaa; }
.ch { width: 14px; height: 14px; background: #1b1b1b; margin: 1px 5px 0 -2px; padding-top: 3px; align-self: flex-start; }
.ch svg { width: 13px; height: 8px; }
.prop .pk { margin-bottom: 3px; }
.scroll { position: absolute; left: 385px; top: 49px; width: 16px; height: 131px; background: #323232; border-radius: 8px; }
.win2 .left { background: linear-gradient(#1b1b1b, #1b1b1b) 385px 49px / 17px 200px no-repeat; }
.foot { height: 15px; border-top: 1px solid #000; display: flex; background: #232323; font: 300 12.500px/14px "Noto Sans CJK SC", sans-serif; color: #b5b5b5; padding-left: 3px; }
.rt { width: 130px; white-space: pre; } .rt b { color: #4fd6a0; font-weight: 400; margin-left: 4px; letter-spacing: .6px; }
.tog { width: 134px; border: 1px solid #343434; border-bottom: 0; text-align: center; line-height: 13px; height: 14px; overflow: hidden; }

/* time ruler and lanes */
.right { position: relative; overflow: hidden; }
.nav { height: 9px; margin: 0 0 0 7px; background: #686868; border: solid #0c0c0c; border-width: 1px 0; }
.nav::before { content: ""; display: block; width: 6px; height: 8px; margin-left: -7px; background: #2d8ceb; border-radius: 6px 0 0 6px; }
.times { height: 20px; display: grid; grid-template-columns: repeat(5, 86.500px); margin-left: 7px; font: 12px/15px "Liberation Serif", serif; color: #aaa; }
.times span { height: 20px; background: linear-gradient(#888, #888) 0 100% / 1px 5px no-repeat; text-indent: -9px; letter-spacing: .2px; }
.times span:first-child { text-indent: -6px; }
.warea { height: 20px; margin-left: 7px; background: #606060; border-top: 1px solid #111; border-bottom: 3px solid #15bd1e; box-shadow: inset 0 -1px #111; }
.warea::before { content: ""; display: block; width: 6px; height: 14px; margin-left: -7px; background: #2d8ceb; border-radius: 5px 0 0 5px; }
.lane { height: 20px; background: linear-gradient(#262626, #262626) 0 0 / 7px 100% no-repeat, #333; border-bottom: 1px solid #1e1e1e; padding: 3px 0 0 43px; }
.lane svg { width: 9px; height: 13px; }
.lane.bar { padding: 2px 0 0 7px; }
.clip { height: 17px; background: repeating-conic-gradient(#a44345 0 25%, #ad4c4d 0 50%) 0 0 / 4px 4px; border: solid #d8a0a0; border-width: 1px 0 0 1px; }
.lane.keys { padding: 4px 0 0 3px; display: flex; gap: 76px; }
.keys svg { width: 10px; height: 10px; }
.head-line { position: absolute; left: 47px; top: 13px; bottom: 0; width: 1px; background: linear-gradient(#2d8ceb, #2d8ceb) 0 14px / 1px 500px no-repeat; }
.head-line svg { width: 12px; height: 14px; margin-left: -6px; }
.win2 .head-line { left: 24px; bottom: 46px; }
.plot { background: #333; }
.gl { font: 300 11px "Liberation Serif", "Noto Sans CJK SC", serif; fill: #a0a0a0; letter-spacing: .7px; }
.gtools { display: flex; align-items: center; height: 31px; padding: 8px 0 0 205px; }
.gtools > svg { align-self: flex-start; }
.q1 { width: 18px; height: 14px; margin: 5px 7px 0 0; } .q2 { width: 18px; height: 16px; margin: 4px 3px 0 0; }
.gtools span { width: 24px; height: 21px; border: 1px solid #333; border-radius: 3px; background: #1a1a1a; display: flex; align-items: center; justify-content: center; flex: none; margin-right: 1px; }
.gtools span svg { width: 16px; height: 16px; }
.gtools .zm { margin: 0 3px 0 25px; } .gtools .zm svg { width: 20px; }
.q3 { width: 8px; height: 14px; margin-top: 3px; }
.zfoot { height: 15px; border-top: 1px solid #000; width: 107px; padding-left: 1px; }
.zfoot svg { margin-left: -1px; }

/* annotations */
.mark { position: absolute; border: 3px solid #ff1100; border-radius: 2px; }
.m1 { left: -6px; top: 558px; width: 528px; height: 33px; }
.m2 { left: 1065px; top: 371px; width: 36px; height: 36px; }
.m3 { left: 1104px; top: 430px; width: 127px; height: 164px; }
.pins { position: absolute; left: 0; top: 0; }
.num text { font: 20px "Noto Sans", sans-serif; fill: #fff; text-anchor: middle; }
.note { position: absolute; margin: 0; font: 400 24.500px/30px "Noto Sans CJK SC", sans-serif; color: #ff1100; -webkit-text-stroke: .8px #ff1100; white-space: nowrap; text-shadow: 1px 1px 0 #000, -1px -1px 0 #000, 1px -1px 0 #000, -1px 1px 0 #000, 2px 2px 2px #000; letter-spacing: 1.100px; }
.note b { font: 700 25px/30px "Liberation Sans", sans-serif; }
.n1 { left: 232px; top: 417px; }
.n2 { left: 1192px; top: 364px; }
.n3 { left: 1192px; top: 397px; }
```
